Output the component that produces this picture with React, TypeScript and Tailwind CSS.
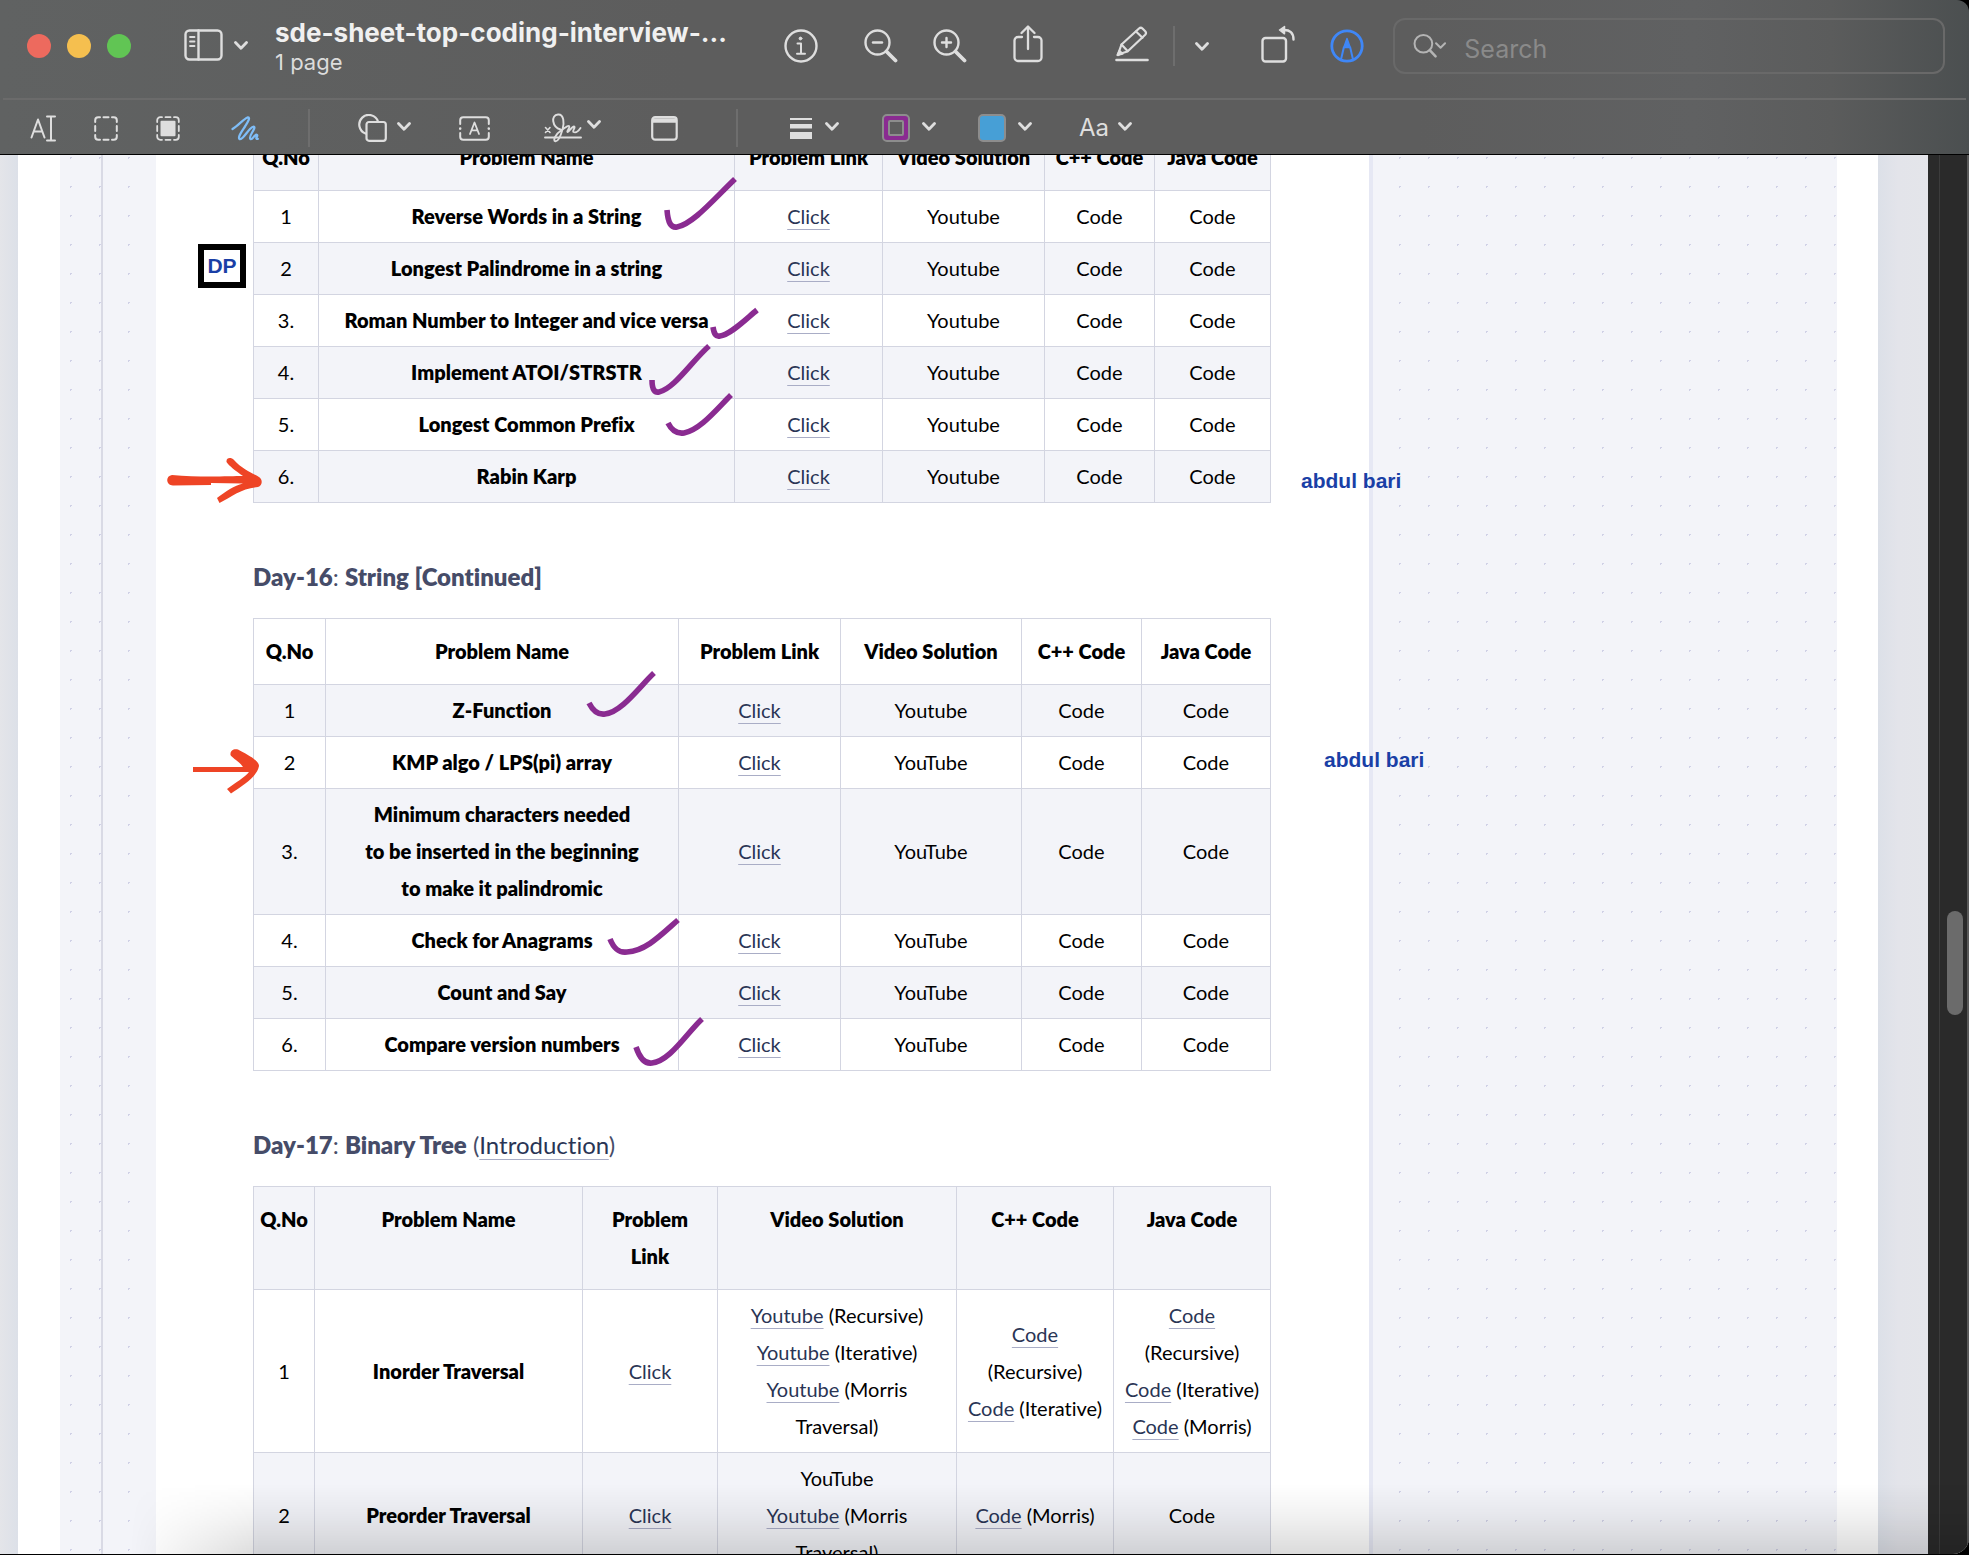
import type { ReactNode } from "react";

const INK = "#dedede";

/* ---------- toolbar pieces ---------- */

function Chevron({ className = "" }: { className?: string }) {
  return (
    <svg aria-hidden="true" viewBox="0 0 14 9" className={`h-[9px] w-[14px] ${className}`} fill="none" stroke={INK} strokeWidth="2.8" strokeLinecap="round" strokeLinejoin="round">
      <path d="M1.500 1.500 7 7.200l5.500-5.700" />
    </svg>
  );
}

function ToolButton({ label, className = "", children }: { label: string; className?: string; children: ReactNode }) {
  return (
    <button type="button" aria-label={label} className={`flex shrink-0 items-center ${className}`}>
      {children}
    </button>
  );
}

function Glyph({ w, h, children, stroke = INK, width = 2.2 }: { w: number; h: number; children: ReactNode; stroke?: string; width?: number }) {
  return (
    <svg aria-hidden="true" width={w} height={h} viewBox={`0 0 ${w} ${h}`} fill="none" stroke={stroke} strokeWidth={width} strokeLinecap="round" strokeLinejoin="round">
      {children}
    </svg>
  );
}

function TitleBar() {
  return (
    <div className="flex h-[98px] items-start">
      <div className="ml-[27px] mt-[34px] flex shrink-0 gap-4">
        <button type="button" aria-label="Close" className="size-6 rounded-full bg-[#ed6a5e]" />
        <button type="button" aria-label="Minimize" className="size-6 rounded-full bg-[#f5bf4f]" />
        <button type="button" aria-label="Zoom window" className="size-6 rounded-full bg-[#61c554]" />
      </div>
      <ToolButton label="Sidebar" className="ml-[53px] mt-[29px] gap-[11px]">
        <Glyph w={39} h={32} width={2.4}>
          <rect x="1.500" y="1.500" width="36" height="29" rx="4" />
          <path d="M14.500 1.500v29" />
          <path d="M6 8h4.500M6 12.500h4.500M6 17h4.500" strokeWidth="1.800" />
        </Glyph>
        <Chevron />
      </ToolButton>
      <div className="ml-[27px] mt-4 w-[480px] shrink-0">
        <h1 className="truncate text-[26px]/[34px] font-bold text-[#f0f0f0]">sde-sheet-top-coding-interview-...</h1>
        <p className="text-[22px]/[24px] text-[#dcdcdc]">1 page</p>
      </div>
      <div className="ml-[29px] mt-[22px] flex h-12 shrink-0 items-center">
        <ToolButton label="Info">
          <Glyph w={34} h={34} width={2.4}>
            <circle cx="17" cy="17" r="15.500" />
            <circle cx="16.500" cy="9.500" r="1.400" fill={INK} strokeWidth="1" />
            <path d="M13.500 14.500h3.500v10M13 24.800h8" strokeWidth="2" />
          </Glyph>
        </ToolButton>
        <ToolButton label="Zoom out" className="ml-[46px]">
          <Glyph w={34} h={34} width={2.4}>
            <circle cx="13.500" cy="13.500" r="12" />
            <path d="M9 13.500h9" />
            <path d="m22.500 22.500 9 9" strokeWidth="3.800" />
          </Glyph>
        </ToolButton>
        <ToolButton label="Zoom in" className="ml-[35px]">
          <Glyph w={34} h={34} width={2.4}>
            <circle cx="13.500" cy="13.500" r="12" />
            <path d="M9 13.500h9M13.500 9v9" />
            <path d="m22.500 22.500 9 9" strokeWidth="3.800" />
          </Glyph>
        </ToolButton>
        <ToolButton label="Share" className="-mt-1 ml-[46px]">
          <Glyph w={30} h={38} width={2.3}>
            <path d="M9 12H5a3.500 3.500 0 0 0-3.500 3.500v17A3.500 3.500 0 0 0 5 36h20a3.500 3.500 0 0 0 3.500-3.500v-17A3.500 3.500 0 0 0 25 12h-4" />
            <path d="M15 24V2M8.500 8 15 1.500 21.500 8" />
          </Glyph>
        </ToolButton>
        <ToolButton label="Highlight" className="-mt-1 ml-[72px]">
          <Glyph w={34} h={36} width={2.2}>
            <path d="M1.500 34h31" strokeWidth="2.600" />
            <path d="M4 25.500 6.500 18.500 24 2.500c1.200-1 2.500-.9 3.500 0l2.700 2.700c1 1.100 1 2.400 0 3.500L12.500 25.500 5 27.800 3 29z" />
            <path d="m6.500 18.500 6 6.500M21 5.500l6.500 6.300" />
            <path d="M2.500 29 4.500 25l3 2.700z" fill={INK} />
          </Glyph>
        </ToolButton>
        <span className="ml-6 h-10 w-[2px] bg-[#6e6e6e]" />
        <ToolButton label="Highlight colours" className="ml-5">
          <Chevron />
        </ToolButton>
        <ToolButton label="Rotate" className="-mt-1 ml-[52px]">
          <Glyph w={34} h={38} width={2.4}>
            <rect x="1.500" y="13" width="23.500" height="23.500" rx="3" />
            <path d="M22 5c7-.5 10.500 3 10.500 9.500" />
            <path d="M23.500 1.500v7.300L18.500 5z" fill={INK} strokeWidth="1.500" />
          </Glyph>
        </ToolButton>
        <ToolButton label="Markup" className="ml-[35px]">
          <Glyph w={34} h={34} stroke="#3f87f7" width={2.800}>
            <circle cx="17" cy="17" r="15.200" />
            <path d="M17 9.500 13.800 18.500h6.400z" fill="#3f87f7" strokeWidth="1.500" />
            <path d="M13.800 18.500 11 30.500M20.200 18.500 23 30.500" strokeWidth="2" />
          </Glyph>
        </ToolButton>
      </div>
      <label className="ml-[29px] mr-6 mt-[18px] flex h-14 flex-1 items-center rounded-xl border-2 border-[#696969] pl-[18px]">
        <Glyph w={38} h={28} stroke="#b4b4b4" width={2.2}>
          <circle cx="11.500" cy="11.500" r="9.800" />
          <path d="m18.500 18.500 6.500 7" strokeWidth="2.800" />
          <path d="m25.500 11 5 5 5-5" />
        </Glyph>
        <input type="search" aria-label="Search" placeholder="Search" className="ml-[17px] mt-[6px] w-full min-w-0 bg-transparent text-[25px]/[30px] outline-none placeholder:text-[#8a8a8a]" />
      </label>
    </div>
  );
}

function MarkupBar() {
  return (
    <div className="mx-[3px] flex h-[56px] items-center border-t-2 border-[#6b6b6b] pt-[2px]">
      <ToolButton label="Text selection" className="ml-[27px]">
        <Glyph w={26} h={27} width={2}>
          <path d="M1.500 22.500 8 4.500l6.500 18M3.800 16.500h8.500" />
          <path d="M17 1.500h8M21 1.500v24M17 25.500h8" />
        </Glyph>
      </ToolButton>
      <ToolButton label="Rectangular selection" className="ml-[38px]">
        <Glyph w={24} h={25} width={2}>
          <path d="M1.200 6V4.200a3 3 0 0 1 3-3H6M18 1.200h1.800a3 3 0 0 1 3 3V6M22.800 19v1.800a3 3 0 0 1-3 3H18M6 23.800H4.200a3 3 0 0 1-3-3V19M9.500 1.200h5M9.500 23.800h5M1.200 10v5M22.800 10v5" />
        </Glyph>
      </ToolButton>
      <ToolButton label="Instant alpha" className="ml-[38px]">
        <Glyph w={24} h={25} width={1.800}>
          <path d="M1.200 6V4.200a3 3 0 0 1 3-3H6M18 1.200h1.800a3 3 0 0 1 3 3V6M22.800 19v1.800a3 3 0 0 1-3 3H18M6 23.800H4.200a3 3 0 0 1-3-3V19M9.500 1.200h5M9.500 23.800h5M1.200 10v5M22.800 10v5" />
          <rect x="4.500" y="4.800" width="15" height="15.500" rx="1" fill={INK} stroke="none" />
        </Glyph>
      </ToolButton>
      <ToolButton label="Sketch" className="ml-[51px]">
        <Glyph w={28} h={25} stroke="#7fbdf7" width={2.300}>
          <path d="M1.500 13C7 10 13 2.500 16.500 1.500c3.500-.3 0 5-2.500 9-3 4.500-7.500 10.500-5.500 12.500 2.500 1.500 7-6.500 10.500-10 4-4 5.500-2.500 3.500 1-1.500 3-5 7.500-3 9 1.500.8 2.500-1.500 4-3 2-2 3.300-1.300 2.500.3-1 1.500-1 3 .8 2.500" />
        </Glyph>
      </ToolButton>
      <span className="ml-[49px] h-[38px] w-[2px] bg-[#6e6e6e]" />
      <ToolButton label="Shapes" className="ml-12 gap-[10px]">
        <Glyph w={29} h={28} width={2.200}>
          <path d="M7.500 19.500A9.600 9.600 0 1 1 20 7.500" />
          <rect x="8.500" y="8" width="19.300" height="18.800" rx="2.500" />
        </Glyph>
        <Chevron className="mb-1" />
      </ToolButton>
      <ToolButton label="Text" className="ml-12">
        <Glyph w={31} h={25} width={2}>
          <path d="M1.200 8V4.200a3 3 0 0 1 3-3h22.600a3 3 0 0 1 3 3V8M29.800 17v3.800a3 3 0 0 1-3 3H4.200a3 3 0 0 1-3-3V17" />
          <path d="M1.200 12.500v.1M29.800 12.500v.1" strokeWidth="2.600" />
          <path d="m11 18 4.500-11.500L20 18M12.500 14.300h6" strokeWidth="1.800" />
        </Glyph>
      </ToolButton>
      <ToolButton label="Sign" className="ml-[54px] gap-[5px]">
        <Glyph w={38} h={30} width={1.900}>
          <path d="M1 24.500h36" />
          <path d="m1.500 14.500 4.500 5M6 14.500l-4.500 5" strokeWidth="1.600" />
          <path d="M16.500 16.500C8 14 6.500 2 14 1.500c6-.5 6.500 9 4.500 15-2 7-4 12-7 11.800-3.500-.8 1-7.800 5.500-10.800 4-2.500 7-5.500 8-4.500 1.500 1-2.500 5.500-1.500 6 1.500.5 4-5.500 6.500-5.500 2 .5-2 4.500-.5 5.500 2 1 5-1 7-4" />
        </Glyph>
        <Chevron className="mb-2" />
      </ToolButton>
      <ToolButton label="Note" className="ml-[50px]">
        <Glyph w={27} h={25} width={2.200}>
          <rect x="1.200" y="1.200" width="24.500" height="22.500" rx="3" />
          <path d="M2 4.500h23" strokeWidth="4.500" strokeLinecap="butt" />
        </Glyph>
      </ToolButton>
      <span className="ml-[58px] h-[38px] w-[2px] bg-[#6e6e6e]" />
      <ToolButton label="Shape style" className="ml-[52px] gap-[13px]">
        <Glyph w={22} h={21}>
          <path d="M0 0h22v2H0zM0 6h22v4.500H0zM0 14h22v7H0z" fill={INK} stroke="none" />
        </Glyph>
        <Chevron className="mb-1" />
      </ToolButton>
      <ToolButton label="Border colour" className="ml-[43px] gap-[12px]">
        <span className="flex size-7 items-center justify-center rounded-[5px] border-2 border-[#8d8d8d] bg-[#8a2b91]">
          <span className="size-4 rounded-[2px] border-2 border-[#8d8d8d] bg-[#5e5e5e]" />
        </span>
        <Chevron className="mb-1" />
      </ToolButton>
      <ToolButton label="Fill colour" className="ml-[42px] gap-[12px]">
        <span className="size-7 rounded-[5px] border-2 border-[#8d8d8d] bg-[#479fd6]" />
        <Chevron className="mb-1" />
      </ToolButton>
      <ToolButton label="Text style" className="ml-[47px] gap-[9px]">
        <span className="text-[24px]/[28px] text-[#dedede]">Aa</span>
        <Chevron className="mb-1" />
      </ToolButton>
    </div>
  );
}

/* ---------- document pieces ---------- */

const A = ({ children }: { children: ReactNode }) => (
  <a href="#" className="text-[#2a3555] underline decoration-[#a9adc6] decoration-1 underline-offset-[5px]">
    {children}
  </a>
);

type Row = ReactNode[];

const HEAD: Row = ["Q.No", "Problem Name", "Problem Link", "Video Solution", "C++ Code", "Java Code"];

function Sheet({ cols, rows, shade, head = HEAD }: { cols: number[]; rows: Row[]; shade: "odd" | "even"; head?: Row }) {
  const total = cols.reduce((a, b) => a + b, 0);
  const tint = (i: number) => ((i % 2 === 0) === (shade === "odd") ? "bg-[#f3f4f9]" : "bg-white");
  return (
    <table className="w-full table-fixed border-collapse text-center text-xl/[37px] text-black">
      <colgroup>
        {cols.map((c, i) => (
          <col key={i} style={{ width: `${(c / total) * 100}%` }} />
        ))}
      </colgroup>
      <thead>
        <tr className={tint(0)}>
          {head.map((h, i) => (
            <th key={i} scope="col" className="border border-[#d3d5e1] px-1 py-[14px] align-top font-extrabold">
              {h}
            </th>
          ))}
        </tr>
      </thead>
      <tbody>
        {rows.map((r, i) => (
          <tr key={i} className={tint(i + 1)}>
            {r.map((c, j) => (
              <td key={j} className={`border border-[#d3d5e1] px-2 py-[7px] ${j === 1 ? "font-extrabold" : ""}`}>
                {c}
              </td>
            ))}
          </tr>
        ))}
      </tbody>
    </table>
  );
}

const simple = (no: string, name: ReactNode, video: string): Row => [no, name, <A key="l">Click</A>, video, "Code", "Code"];

const DAY15 = [
  simple("1", "Reverse Words in a String", "Youtube"),
  simple("2", "Longest Palindrome in a string", "Youtube"),
  simple("3.", "Roman Number to Integer and vice versa", "Youtube"),
  simple("4.", "Implement ATOI/STRSTR", "Youtube"),
  simple("5.", "Longest Common Prefix", "Youtube"),
  simple("6.", "Rabin Karp", "Youtube"),
];

const DAY16 = [
  simple("1", "Z-Function", "Youtube"),
  simple("2", "KMP algo / LPS(pi) array", "YouTube"),
  simple("3.", <>Minimum characters needed<br />to be inserted in the beginning<br />to make it palindromic</>, "YouTube"),
  simple("4.", "Check for Anagrams", "YouTube"),
  simple("5.", "Count and Say", "YouTube"),
  simple("6.", "Compare version numbers", "YouTube"),
];

const DAY17_HEAD: Row = ["Q.No", "Problem Name", <>Problem<br />Link</>, "Video Solution", "C++ Code", "Java Code"];

const DAY17: Row[] = [
  [
    "1",
    "Inorder Traversal",
    <A key="l">Click</A>,
    <><A>Youtube</A> (Recursive)<br /><A>Youtube</A> (Iterative)<br /><A>Youtube</A> (Morris<br />Traversal)</>,
    <><A>Code</A><br />(Recursive)<br /><A>Code</A> (Iterative)</>,
    <><A>Code</A><br />(Recursive)<br /><A>Code</A> (Iterative)<br /><A>Code</A> (Morris)</>,
  ],
  [
    "2",
    "Preorder Traversal",
    <A key="l">Click</A>,
    <>YouTube<br /><A>Youtube</A> (Morris<br />Traversal)</>,
    <><A>Code</A> (Morris)</>,
    "Code",
  ],
];

const DOTS = "bg-[#f3f4f9] bg-[radial-gradient(circle,#d0d1e6_1px,transparent_1px)] bg-[length:29px_29px]";

/* Hand-drawn marks lying over the page; its origin is the top left of the article. */
function Ink() {
  return (
    <svg aria-hidden="true" className="pointer-events-none absolute left-0 top-0" width="1213" height="1400" viewBox="156 155 1213 1400" overflow="visible" fill="none">
      <g stroke="#8a2b91" strokeWidth="5.600">
        <path d="M667 210C668 223 671 228 677 227C693 224 714 199 735 179" />
        <path d="M713 327C714 334 716 337 720 336C730 335 745 320 757 310" />
        <path d="M652 380C652 390 655 393 659 392C674 389 692 361 709 346" />
        <path d="M668 423C672 431 677 434 684 433C700 430 716 410 731 395" />
        <path d="M589 703C593 711 598 715 605 714C622 712 640 686 654 673" />
        <path d="M610 939C614 949 619 953 627 952C646 951 662 934 678 920" />
        <path d="M636 1047C640 1059 645 1064 652 1063C670 1061 686 1034 702 1019" />
      </g>
      <g fill="#ee4425">
        <path d="M172 475C200 477.500 230 476 243 476C236 471 229 466 226.500 462C226 457.500 231 457 234 460C242 469 252 473 259 477C263 480 262.500 485 258 487C242 488 231 497 219.500 503L217 498C226 491 234 486 243 483.500L211 483V485L173 485.500C166 485.500 165 476 172 475Z" />
        <path d="M193 767H243C239 761 232 758 230.500 755C230 750 234 748.500 238 749.500C246 754 259 760 259 766C257 777 242 786 231 793.500L227 789C235 783 245 777 249 772H193Z" />
      </g>
    </svg>
  );
}

export default function App() {
  return (
    <div className="flex h-screen flex-col overflow-hidden bg-black font-['Inter',sans-serif]">
      <header className="shrink-0 overflow-hidden rounded-tr-xl border-b border-black bg-[linear-gradient(90deg,#606262_0%,#5d5d5d_35%,#5d5d5d_72%,#606162_86%,#5b5c5c_93%,#4b4f50_100%)]">
        <TitleBar />
        <MarkupBar />
      </header>

      <main className="relative flex min-h-0 flex-1 overflow-hidden rounded-br-2xl bg-white font-['Lato',sans-serif] [font-variant-ligatures:none]">
        <div className="w-[18px] shrink-0 bg-[linear-gradient(90deg,#e4e5e9,#dce0e8)]" />
        <div className="w-[42px] shrink-0 bg-white" />
        <div className={`flex w-24 shrink-0 ${DOTS} bg-position-[-4px_-12px]`}>
          <div className="ml-[41px] w-[2px] bg-[#d9dae5]" />
        </div>

        <article className="relative min-w-0 flex-1 pl-[97px] pr-[98px]">
          <div className="-mt-[31px]">
            <Sheet shade="odd" cols={[65, 416, 148, 162, 110, 116]} rows={DAY15} />
          </div>
          <h2 className="mb-[23px] mt-[55px] text-2xl/[37px] text-[#464c68]">
            <b className="font-extrabold">Day-16</b>: <b className="font-extrabold">String [Continued]</b>
          </h2>
          <Sheet shade="even" cols={[72, 353, 162, 181, 120, 129]} rows={DAY16} />
          <h2 className="mb-[23px] mt-[55px] text-2xl/[37px] text-[#464c68]">
            <b className="font-extrabold">Day-17</b>: <b className="font-extrabold">Binary Tree</b> (<A>Introduction</A>)
          </h2>
          <Sheet shade="odd" cols={[61, 268, 135, 239, 157, 157]} rows={DAY17} head={DAY17_HEAD} />

          <Ink />
          <div className="absolute left-[42px] top-[89px] flex h-[44px] w-12 items-center justify-center border-[6px] border-black bg-white font-['Liberation_Sans',sans-serif] text-[21px] font-bold text-[#1a3fa6]">
            DP
          </div>
          <p className="absolute left-[1145px] top-[312px] z-10 whitespace-nowrap font-['Liberation_Sans',sans-serif] text-[21px]/[28px] font-bold text-[#1a3fa6]">abdul bari</p>
          <p className="absolute left-[1168px] top-[591px] z-10 whitespace-nowrap font-['Liberation_Sans',sans-serif] text-[21px]/[28px] font-bold text-[#1a3fa6]">abdul bari</p>
        </article>

        <div className={`w-[468px] shrink-0 border-l-4 border-[#e6e8f4] ${DOTS} bg-position-[12px_-12px]`} />
        <div className="w-[41px] shrink-0 bg-white" />
        <div className="w-[50px] shrink-0 bg-[linear-gradient(90deg,#dce0e8,#e3e4ea_40%,#e4e5ea)]" />
        <div className="flex w-[41px] shrink-0 border-r-2 border-[#5a5a5a] bg-[#2a2a2a]">
          <div className="ml-[11px] flex w-full justify-end border-l border-[#3c3c3c] pr-1">
            <div className="mt-[756px] h-[104px] w-4 rounded-full bg-[#6b6b6b]" />
          </div>
        </div>

        <div className="pointer-events-none absolute bottom-0 left-[130px] right-0 h-[70px] bg-[linear-gradient(0deg,rgba(0,0,0,0.14),rgba(0,0,0,0.05)_55%,transparent)] [mask-image:linear-gradient(90deg,transparent,black_130px)]" />
      </main>
      <div className="h-px shrink-0 bg-black" />
    </div>
  );
}
